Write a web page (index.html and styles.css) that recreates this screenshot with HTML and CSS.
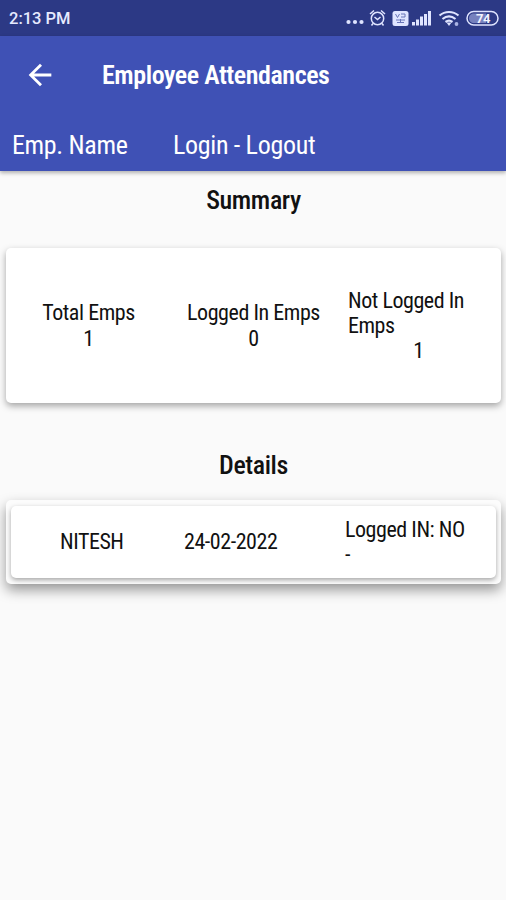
FILE: index.html
```html
<!DOCTYPE html>
<html lang="en">
<head>
<meta charset="utf-8">
<title>Employee Attendances</title>
<link rel="stylesheet" href="styles.css">
</head>
<body>
<div class="status">
  <span class="time">2:13 PM</span>
  <svg class="status-icons" width="156" height="20" viewBox="0 0 156 20" fill="none" stroke="#dfe4ff" stroke-width="1.5">
    <g fill="#dfe4ff" stroke="none"><circle cx="2.500" cy="14" r="2.100"/><circle cx="9" cy="14" r="2.100"/><circle cx="15.500" cy="14" r="2.100"/></g>
    <circle cx="31.500" cy="10.500" r="6.200"/><path d="M24 6L28 2.500M39 6L35 2.500M28.500 9l3 2.500 3-2.500M27 15.500l-1.500 2M36 15.500l1.500 2"/>
    <rect x="46.500" y="3" width="16" height="15" rx="2.500" fill="#dfe4ff" stroke="none"/>
    <path d="M49.500 6l2 3.500 2-3.500M55 6h4v3h-4M50 12h9M51 14.500h7M54.500 11v4" stroke="#6874b8" stroke-width="1"/>
    <g fill="#dfe4ff" stroke="none"><rect x="66" y="14" width="3" height="3.500"/><rect x="70" y="11.500" width="3" height="6"/><rect x="74" y="8.500" width="3" height="9"/><rect x="78" y="6" width="3" height="11.500"/><rect x="82" y="3" width="3" height="14.500"/></g>
    <path d="M93.500 7.500c5.500-4.700 13.500-4.700 19 0M96.500 11c4-3.300 9-3.300 13 0M99.500 14c2.200-1.600 4.800-1.600 7 0" stroke-width="2.200"/>
    <path d="M100.500 14.500l2.500 3.500 2.500-3.500z" fill="#dfe4ff" stroke="none"/><circle cx="110.500" cy="16" r="1.900" fill="#aab3e4" stroke="none"/>
    <rect x="121" y="3.500" width="31" height="13.500" rx="6.750"/><path d="M128 5.500h12v9.500h-12c-3 0-5-2-5-4.750s2-4.750 5-4.750z" fill="#7681be" stroke="none"/>
    <text class="charge" x="130" y="14.700">74</text>
  </svg>
</div>
<header class="appbar">
  <div class="toolbar">
    <svg class="back" width="34" height="34" viewBox="0 0 24 24"><path fill="#fff" d="M20 11H7.830l5.590-5.590L12 4l-8 8 8 8 1.410-1.410L7.830 13H20z"/></svg>
    <h1>Employee Attendances</h1>
  </div>
  <div class="columns"><span class="name">Emp. Name</span><span>Login - Logout</span></div>
</header>
<main>
  <h2>Summary</h2>
  <section class="card summary">
    <div class="cell"><span>Total Emps</span><span class="count">1</span></div>
    <div class="cell"><span>Logged In Emps</span><span class="count">0</span></div>
    <div class="cell"><span>Not Logged In Emps</span><span class="count">1</span></div>
  </section>
  <h2 class="details-title">Details</h2>
  <section class="card details">
    <div class="card row">
      <span class="emp">NITESH</span><span class="date">24-02-2022</span><span class="state">Logged IN: NO<br>-</span>
    </div>
  </section>
</main>
</body>
</html>
```
FILE: styles.css
```css
* { box-sizing: border-box; }
body { margin: 0; min-height: 900px; background: #fafafa; color: #111; font-family: "Roboto Condensed", Roboto, sans-serif; font-stretch: 75%; letter-spacing: -.4px; }
.status { height: 36px; background: #2c3985; display: flex; align-items: center; justify-content: space-between; padding: 0 4px 0 9px; color: #e6eaff; }
.time { font-family: Roboto, sans-serif; font-stretch: 100%; font-size: 16.5px; font-weight: 500; letter-spacing: 0; padding-top: 1px; }
.charge { font: bold 13px Roboto, sans-serif; fill: #f2f4ff; stroke: none; }
.appbar { height: 134.500px; background: #3f51b5; color: #fff; box-shadow: 0 2px 4px rgba(0,0,0,.3); }
.toolbar { height: 78px; display: flex; align-items: center; padding-left: 23px; }
.back { margin-right: 45px; }
h1 { margin: 0; font-size: 26px; font-weight: 600; letter-spacing: -.45px; }
.columns { display: flex; padding-left: 12px; height: 62px; align-items: center; font-size: 26px; letter-spacing: -.32px; }
.name { width: 161px; }
main { padding: 0 5px 0 6px; }
h2 { margin: 0; height: 77.500px; padding-top: 13px; text-align: center; font-size: 26px; line-height: 32px; font-weight: 530; }
.card { background: #fff; border-radius: 5px; box-shadow: 0 3px 7px rgba(0,0,0,.35); }
.summary { height: 155px; display: grid; grid-template-columns: repeat(3, 1fr); align-items: center; font-size: 22px; font-weight: 450; letter-spacing: -.45px; line-height: 25.300px; }
.cell { display: flex; flex-direction: column; align-items: center; padding: 0 12px; }
.details-title { height: 97px; padding-top: 46px; }
.details { height: 84px; padding: 6px 5px; background: #fcfcfc; box-shadow: 0 6px 13px rgba(0,0,0,.4); }
.row { height: 72px; display: flex; align-items: center; padding-left: 49px; font-size: 22px; font-weight: 450; letter-spacing: -.45px; line-height: 25.300px; box-shadow: 0 2px 5px rgba(0,0,0,.35); }
.emp { width: 124px; }
.date { width: 161px; }
```
